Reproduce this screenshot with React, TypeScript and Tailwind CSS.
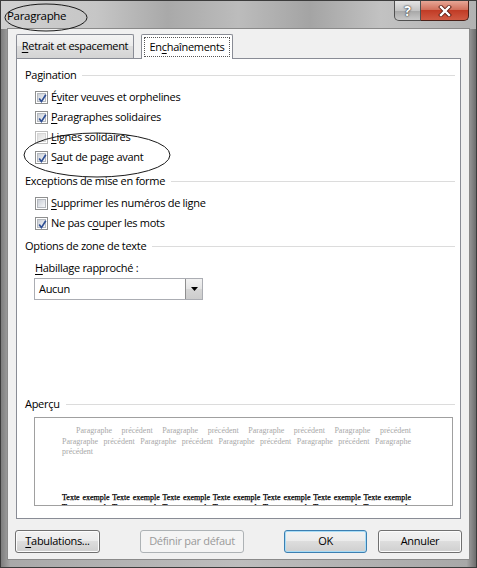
import React from "react";

const U = ({ children }: { children: React.ReactNode }) => (
  <span className="underline underline-offset-[2px] decoration-[1px]">{children}</span>
);

function CheckBox({ checked, faded }: { checked?: boolean; faded?: boolean }) {
  return (
    <span
      className={`relative shrink-0 w-[13px] h-[13px] border ${
        faded ? "border-[#bdbdbd]" : "border-[#8e8f8f]"
      } bg-white p-[1px] flex`}
    >
      <span
        className={`flex-1 border ${
          faded
            ? "border-[#d6d6d6] bg-[linear-gradient(135deg,#dedede,#f4f4f4)]"
            : "border-[#b4b8be] bg-[linear-gradient(135deg,#c9ced6,#f6f7f8)]"
        }`}
      />
      {checked && (
        <svg className="absolute left-[1px] top-[1px]" width="11" height="11" viewBox="0 0 11 11">
          <path d="M2.2 5.6 L4.4 8.6 L8.8 1.8" stroke="#2f4f94" strokeWidth="1.7" fill="none" />
        </svg>
      )}
    </span>
  );
}

function Header({ title, className = "" }: { title: string; className?: string }) {
  return (
    <div className={`flex items-center h-[16px] pl-[8px] pr-[5px] ${className}`}>
      <span className="whitespace-nowrap">{title}</span>
      <span className="flex-1 h-px bg-[#dcdcdc] ml-[6px]" />
    </div>
  );
}

function Row({
  children,
  checked,
  faded,
  className = "",
}: {
  children: React.ReactNode;
  checked?: boolean;
  faded?: boolean;
  className?: string;
}) {
  return (
    <div className={`flex items-center h-[20px] pl-[18px] ${className}`}>
      <CheckBox checked={checked} faded={faded} />
      <span className="ml-[3px] whitespace-nowrap">{children}</span>
    </div>
  );
}

function Btn({
  children,
  className = "",
  variant = "normal",
}: {
  children: React.ReactNode;
  className?: string;
  variant?: "normal" | "disabled" | "default";
}) {
  const v =
    variant === "disabled"
      ? "border-[#adb2b5] bg-[#f4f4f4] text-[#9a9a9a]"
      : variant === "default"
      ? "border-[#3c7fb1] bg-[linear-gradient(180deg,#f2f2f2_0%,#ebebeb_50%,#dddddd_50%,#cfcfcf_100%)] shadow-[inset_0_0_0_1px_#a8dcf6] text-black"
      : "border-[#707070] bg-[linear-gradient(180deg,#f2f2f2_0%,#ebebeb_50%,#dddddd_50%,#cfcfcf_100%)] shadow-[inset_0_0_0_1px_#fcfcfc] text-black";
  return (
    <div className={`h-[23px] border rounded-[3px] flex items-center justify-center ${v} ${className}`}>
      {children}
    </div>
  );
}

const PREV1 = "Paragraphe précédent Paragraphe précédent Paragraphe précédent Paragraphe précédent";
const PREV2 =
  "Paragraphe précédent Paragraphe précédent Paragraphe précédent Paragraphe précédent Paragraphe";
const TEX = "Texte exemple Texte exemple Texte exemple Texte exemple Texte exemple Texte exemple Texte exemple";

export default function App() {
  return (
    <div className="relative w-[477px] h-[568px] overflow-hidden bg-[linear-gradient(90deg,#7d7d7d,#a9a9a9_2%,#bdbdbd_50%,#a8a8a8_98%,#6d6d6d)] border border-[#3c3c3c] font-['Open_Sans',sans-serif] text-[11px] tracking-[-0.3px] text-black">
      {/* title bar */}
      <div className="h-[28px] flex items-start bg-[linear-gradient(90deg,#d0d0d0,#c6c6c6_20%,#a9a9a9_35%,#bcbcbc_50%,#a4a4a4_65%,#c2c2c2_80%,#b2b2b2)]">
        <div className="mt-[7px] ml-[6px] leading-[16px] text-[11.5px]">Paragraphe</div>
        <div className="ml-auto mr-[7px] flex">
          <div className="w-[27px] h-[20px] border border-t-0 border-[#505050] rounded-bl-[5px] bg-[linear-gradient(180deg,#e4e4e4,#c4c4c4_50%,#a6a6a6_51%,#c8c8c8)] flex items-center justify-center">
            <span className="text-white font-bold text-[14px] leading-none [text-shadow:0_0_2px_#333,0_0_1px_#222]">?</span>
          </div>
          <div className="w-[48px] h-[20px] border border-t-0 border-l-0 border-[#4a2119] rounded-br-[5px] bg-[linear-gradient(180deg,#e7a696,#d2715d_45%,#c13c26_50%,#d05a43)] flex items-center justify-center">
            <svg width="14" height="12" viewBox="0 0 14 12">
              <path d="M3 2 L11 10 M11 2 L3 10" stroke="#5a1a10" strokeWidth="4" strokeLinecap="square" />
              <path d="M3 2 L11 10 M11 2 L3 10" stroke="#ffffff" strokeWidth="2.4" strokeLinecap="square" />
            </svg>
          </div>
        </div>
      </div>

      {/* client */}
      <div className="mx-[7px] h-[530px] bg-[#f0f0f0] shadow-[0_0_0_1px_#8a8a8a] flex flex-col">
        {/* tabs */}
        <div className="flex items-end ml-[8px] mt-[5px] h-[24px] relative z-10">
          <div className="h-[24px] w-[118px] border border-b-0 border-[#898c95] rounded-t-[2px] bg-[linear-gradient(180deg,#f3f3f3,#ebebeb_50%,#dedede_50%,#d4d4d4)] flex items-center justify-center">
            <span className="whitespace-nowrap">
              <U>R</U>etrait et espacement
            </span>
          </div>
          <div className="ml-[7px] h-[25px] w-[92px] -mb-px border border-b-0 border-[#898c95] rounded-t-[2px] bg-white p-[2px]">
            <div className="h-full border border-dotted border-[#555] flex items-center justify-center">
              <span className="whitespace-nowrap">
                En<U>c</U>haînements
              </span>
            </div>
          </div>
        </div>

        {/* panel */}
        <div className="ml-[8px] w-[445px] h-[461px] border border-[#898c95] bg-white flex flex-col">
          <Header title="Pagination" className="mt-[8px]" />
          <Row checked className="mt-[4px]">
            É<U>v</U>iter veuves et orphelines
          </Row>
          <Row checked>
            <U>P</U>aragraphes solidaires
          </Row>
          <Row faded>
            <U>L</U>ignes solidaires
          </Row>
          <Row checked>
            S<U>a</U>ut de page avant
          </Row>
          <Header title="Exceptions de mise en forme" className="mt-[6px]" />
          <Row className="mt-[4px]">
            <U>S</U>upprimer les numéros de ligne
          </Row>
          <Row checked>
            Ne pas c<U>o</U>uper les mots
          </Row>
          <Header title="Options de zone de texte" className="mt-[5px]" />
          <div className="mt-[6px] h-[16px] pl-[18px] flex items-center">
            <span>
              <U>H</U>abillage rapproché :
            </span>
          </div>
          <div className="mt-[2px] ml-[17px] w-[169px] h-[22px] border border-[#abadb3] bg-white flex items-center">
            <span className="ml-[4px] flex-1">Aucun</span>
            <div className="w-[17px] h-full border-l border-[#8f8f8f] bg-[linear-gradient(180deg,#f2f2f2,#e4e4e4_50%,#d6d6d6_51%,#cdcdcd)] flex items-center justify-center">
              <svg width="7" height="4" viewBox="0 0 7 4">
                <path d="M0 0 H7 L3.5 4 Z" fill="#000" />
              </svg>
            </div>
          </div>

          <Header title="Aperçu" className="mt-[96px]" />
          <div className="mt-[5px] ml-[17px] w-[419px] h-[89px] border border-[#a0a0a0] bg-white overflow-hidden pl-[27px] pr-[41px] pt-[8px] font-['Liberation_Serif',serif] tracking-normal text-[8px] leading-[10.5px]">
            <div className="text-[#a8a8a8] text-justify [text-align-last:justify] pl-[14px]">{PREV1}</div>
            <div className="text-[#a8a8a8] text-justify [text-align-last:justify]">{PREV2}</div>
            <div className="text-[#a8a8a8]">précédent</div>
            <div className="mt-[35px] text-black [-webkit-text-stroke:0.25px_#000] text-justify [text-align-last:justify] whitespace-nowrap">
              {TEX}
            </div>
            <div className="text-black [-webkit-text-stroke:0.25px_#000] text-justify [text-align-last:justify] whitespace-nowrap">
              {TEX}
            </div>
          </div>
        </div>

        {/* buttons */}
        <div className="mt-[11px] ml-[7px] flex">
          <Btn className="w-[85px]">
            <span>
              <U>T</U>abulations...
            </span>
          </Btn>
          <Btn className="ml-[40px] w-[104px]" variant="disabled">
            Définir par défaut
          </Btn>
          <Btn className="ml-[40px] w-[83px]" variant="default">
            OK
          </Btn>
          <Btn className="ml-[11px] w-[84px]">Annuler</Btn>
        </div>
      </div>

      {/* hand-drawn ellipses */}
      <svg className="absolute left-0 top-0 pointer-events-none" width="477" height="568">
        <ellipse cx="45" cy="16.5" rx="41" ry="13.5" fill="none" stroke="#1a1a1a" strokeWidth="1" />
        <ellipse cx="96" cy="154" rx="73" ry="22" fill="none" stroke="#1a1a1a" strokeWidth="1" />
      </svg>
    </div>
  );
}
